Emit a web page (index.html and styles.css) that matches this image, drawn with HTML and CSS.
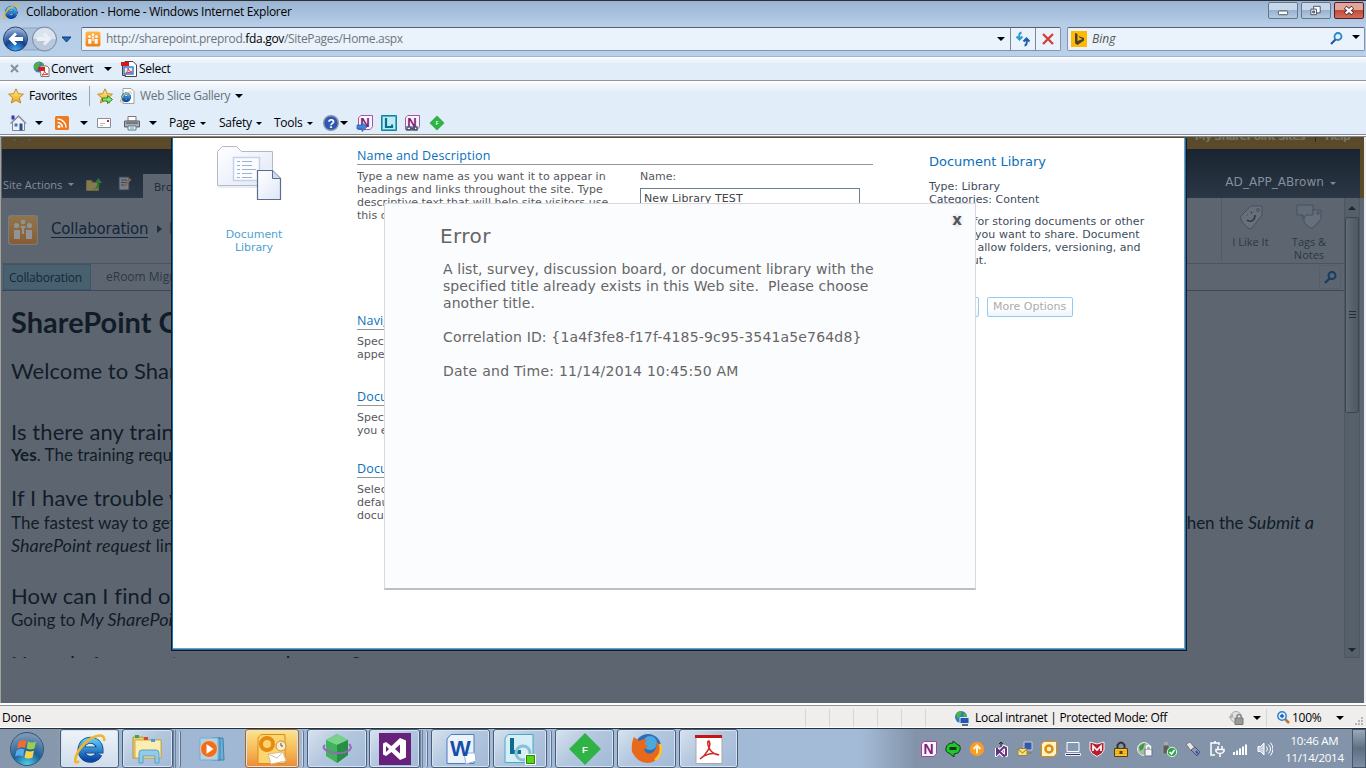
FILE: index.html
```html
<!DOCTYPE html>
<html lang="en">
<head>
<meta charset="utf-8">
<title>Collaboration - Home</title>
<link rel="stylesheet" href="styles.css">
</head>
<body>
<svg width="0" height="0" class="defs" aria-hidden="true">
  <defs>
    <linearGradient id="gold" x2="0" y2="1"><stop stop-color="#fff3a0"/><stop offset="1" stop-color="#f0a010"/></linearGradient>
    <radialGradient id="ball" cx=".5" cy="1" r=".95"><stop stop-color="#45b5ff"/><stop offset=".5" stop-color="#123f8c"/><stop offset="1" stop-color="#9db6dc"/></radialGradient>
    <radialGradient id="orb" cx=".5" cy="1" r=".9"><stop stop-color="#4fd8f0"/><stop offset=".5" stop-color="#1b5f96"/><stop offset="1" stop-color="#7894b4"/></radialGradient>
    <linearGradient id="ieb" x2="0" y2="1"><stop stop-color="#58c4f4"/><stop offset="1" stop-color="#0b48a8"/></linearGradient>
    <linearGradient id="orange" x2="0" y2="1"><stop stop-color="#ffb84a"/><stop offset="1" stop-color="#f07c10"/></linearGradient>
    <linearGradient id="paper" x2="1" y2="1"><stop stop-color="#fff"/><stop offset="1" stop-color="#dfe7f7"/></linearGradient>
    <symbol id="ie" viewBox="0 0 32 32">
      <path d="M25 21A9.500 9.500 0 1 1 26 17H10" fill="none" stroke="#0d3f7d" stroke-width="7"/>
      <path d="M25 21A9.500 9.500 0 1 1 26 17H10" fill="none" stroke="url(#ieb)" stroke-width="5.500"/>
      <path d="M5 28C-2 34 1 20 10 11S32-1 30 8" fill="none" stroke="#f0b52c" stroke-width="2.600"/>
    </symbol>
    <symbol id="star" viewBox="0 0 16 16"><path d="M8 .8l2.200 4.900 5.200.5-4 3.500 1.200 5.300L8 12.300 3.400 15l1.200-5.300-4-3.500 5.200-.5z" fill="url(#gold)" stroke="#c58a1c"/></symbol>
    <symbol id="people" viewBox="0 0 30 30">
      <rect width="30" height="30" rx="3" fill="#fff" opacity=".5"/><rect x="1" y="1" width="28" height="28" rx="3" fill="url(#orange)"/>
      <g fill="#fff"><circle cx="15" cy="7" r="2.300"/><circle cx="8.500" cy="10.500" r="2.600"/><circle cx="21.500" cy="10.500" r="2.600"/><path d="M6 15h6v9H6zM18 15h6v9h-6zM12 11h6l-2 3v5h-2v-5z"/></g>
    </symbol>
    <symbol id="one" viewBox="0 0 16 16"><path d="M3 .5h12.500v12L13 15.500H.5V3z" fill="#fbf4fb" stroke="#9c4b9a"/><text x="2.500" y="12.500" class="glyph" font-size="14" fill="#7d2078">N</text></symbol>
    <symbol id="fgem" viewBox="0 0 32 32"><path d="M16 1l15 15-15 15L1 16z" fill="#2fb344"/><text x="16" y="19.500" text-anchor="middle" class="glyph" font-size="9" fill="#fff">F</text></symbol>
  </defs>
</svg>

<header class="titlebar">
  <svg class="ie16"><use href="#ie"/></svg>
  <span class="win-title">Collaboration - Home - Windows Internet Explorer</span>
  <div class="winbtns">
    <span class="wb"><svg viewBox="0 0 30 16"><rect x="10" y="8.500" width="10" height="4" rx="1" fill="#fff" stroke="#454c5c"/></svg></span>
    <span class="wb"><svg viewBox="0 0 30 16"><path d="M12.500 3.500h7v7h-7z" fill="#fff" stroke="#454c5c"/><path d="M9.500 6.500h6v6h-6z" fill="#fff" stroke="#454c5c"/><path d="M11.500 8.500h2v2h-2z" fill="#9fb8d5" stroke="#454c5c"/></svg></span>
    <span class="wb close"><svg viewBox="0 0 30 16"><path d="M11 4.500l8 7M19 4.500l-8 7" stroke="#4c3038" stroke-width="4.400"/><path d="M11.500 5l7 6M18.500 5l-7 6" stroke="#fff" stroke-width="2.400"/></svg></span>
  </div>
</header>

<div class="address">
  <svg class="nav" viewBox="0 0 74 30">
    <rect x="14" y="4" width="40" height="22" rx="10" fill="#a9c0dc" stroke="#8ba5c6"/>
    <circle cx="15.500" cy="15" r="12" fill="url(#ball)" stroke="#2d4468"/>
    <path d="M15 8.500l-6.500 6.500 6.500 6.500 2-2L14.500 17H23v-4h-8.500l2.500-2.500z" fill="#fff"/>
    <circle cx="44.500" cy="15" r="12" fill="#b9c9db" stroke="#76879d"/><path d="M33.500 15a11 11 0 0 1 22 0z" fill="#dbe4ee"/>
    <path d="M45 8.500l6.500 6.500-6.500 6.500-2-2 2.500-2.500H37v-4h8.500L43 10.500z" fill="#eaf0f6"/>
    <path d="M62 13h9l-4.500 5z" fill="#1e6ac0" stroke="#123d72"/>
  </svg>
  <div class="urlbox">
    <svg class="i16"><use href="#people"/></svg>
    <span class="url">http://sharepoint.preprod.<b>fda.gov</b>/SitePages/Home.aspx</span>
    <i class="caret push"></i>
    <span class="cell first"><svg width="16" height="16" viewBox="0 0 16 16" fill="none" stroke-width="2"><path d="M6.500 1.500C3 2 4.500 5 4.500 8M1.500 5.500l3 3 3-3" stroke="#2e9bd6"/><path d="M9.500 14.500c3.500-.5 2-3.500 2-6.500M8.500 10.500l3-3 3 3" stroke="#1c5bb0"/></svg></span>
    <span class="cell"><svg width="14" height="14" viewBox="0 0 14 14"><path d="M2 2l10 10M12 2L2 12" stroke="#d0413c" stroke-width="2.400"/></svg></span>
  </div>
  <div class="search">
    <svg width="16" height="16" viewBox="0 0 16 16"><path d="M0 0h16v16H0z" fill="#ffb900"/><path d="M4 2l2.500 1v7l5-2-2.800-1.200L7.500 5l5.500 2v2.500L6.500 14 4 12.300z" fill="#46423a"/></svg>
    <em>Bing</em>
    <svg class="push" width="13" height="13" viewBox="0 0 13 13"><circle cx="8" cy="4.500" r="3.500" fill="#e4f4fd" stroke="#2985c8" stroke-width="1.800"/><path d="M5.500 7.500L1 12" stroke="#1f55a5" stroke-width="2.200"/></svg>
    <i class="caret"></i>
  </div>
</div>

<div class="bar convert">
  <svg class="x" width="9" height="9" viewBox="0 0 9 9"><path d="M1 1l7 7M8 1L1 8" stroke="#8b8f96" stroke-width="2"/></svg>
  <svg class="ic-conv" width="17" height="16" viewBox="0 0 17 16"><circle cx="6" cy="6" r="5.500" fill="#3d78c8"/><path d="M1 5c2-4 4-5 6-4l-1 4-2 4-3-1zM8 1l3 2-1 3z" fill="#4cb33a"/><path d="M7 5h7l2 2v8.500H8z" fill="#fff" stroke="#777"/><path d="M5 6h7v4H5z" fill="#d32020"/><path d="M9 14c2-2 3-3 2-5 1 3 2 4 4 4z" fill="none" stroke="#d33"/></svg>
  <span class="w-convert">Convert</span><i class="caret"></i>
  <svg class="ic-sel" width="16" height="16" viewBox="0 0 16 16"><path d="M1.500 3.500v11h3M4 .5h8l3.500 3.500v11.500H4z" fill="#fff" stroke="#444"/><path d="M0 1h8v4H0z" fill="#d81818"/><path d="M3 6h9v7H3z" fill="#dcecff" stroke="#3d7fd0" stroke-width="1.500"/><path d="M5 12c2-2 2-3 2-5 1 3 2 4 4 4z" fill="none" stroke="#d33"/></svg>
  <span>Select</span>
</div>

<div class="bars">
  <div class="bar favs">
    <svg class="i16"><use href="#star"/></svg>
    <span class="w-fav">Favorites</span>
    <i class="vline"></i>
    <svg width="16" height="16" viewBox="0 0 16 16"><use href="#star"/><path d="M5.500 10h5V7.500l5 4-5 4V13h-5z" fill="#8fe070" stroke="#2a8c23"/></svg>
    <svg class="ml6" width="16" height="16" viewBox="0 0 16 16"><path d="M3 .5h8l3 3v12H3z" fill="#fff" stroke="#98a2ae"/><use href="#ie" x="0" y="3" width="12" height="12"/></svg>
    <span class="gray w-web">Web Slice Gallery</span><i class="caret"></i>
  </div>
  <div class="bar cmds">
    <svg width="18" height="18" viewBox="0 0 18 18"><path d="M3.500 8v8.500h12V8l-6-5.500z" fill="#eaf1fa" stroke="#7c8798"/><path d="M1.500 9.500l8-7.500 7.500 7.500" fill="none" stroke="#8a93a6" stroke-width="1.500"/><path d="M2.500 1.500h3v4h-3z" fill="#2c3cae"/><path d="M5.500 9.500h3v3h-3z" fill="#57709c"/><path d="M10.500 9.500h3v7h-3z" fill="#2f4d8c"/></svg>
    <i class="caret c1"></i>
    <svg class="rss" width="14" height="14" viewBox="0 0 14 14"><rect width="14" height="14" rx="1.500" fill="#ee7b22"/><circle cx="4" cy="10.500" r="1.500" fill="#fff"/><path d="M2.500 6.500a5 5 0 0 1 5 5M2.500 3a8.500 8.500 0 0 1 8.500 8.500" fill="none" stroke="#fff" stroke-width="1.500"/></svg>
    <i class="caret c2"></i>
    <svg class="mail" width="14" height="10" viewBox="0 0 14 10"><path d="M.5.500h13v9H.5z" fill="#fff" stroke="#8c8f98"/><path d="M10 2h2v2h-2z" fill="#d22"/><path d="M3 5.500h5M3 7.500h3" stroke="#bbb"/></svg>
    <svg class="print" width="16" height="16" viewBox="0 0 16 16"><path d="M4 1.500h8V6H4z" fill="#fff" stroke="#777"/><path d="M.5 6h15v6H.5z" fill="#a9adb3" stroke="#5a5e66"/><path d="M2 8h12" stroke="#43474e"/><path d="M4 11h8v4H4z" fill="#e9f6ff" stroke="#678"/><path d="M6 13h4" stroke="#3ba"/></svg>
    <i class="caret c3"></i>
    <span class="w-page">Page</span><i class="caret t"></i>
    <span class="w-safe">Safety</span><i class="caret t"></i>
    <span class="w-tools">Tools</span><i class="caret t"></i>
    <svg class="help" width="16" height="16" viewBox="0 0 16 16"><circle cx="8" cy="8" r="7.300" fill="#2c56b4" stroke="#8a93a6" stroke-width="1.400"/><text x="8" y="12.500" text-anchor="middle" class="glyph" font-size="12" fill="#fff">?</text></svg><i class="caret h"></i>
    <svg class="n1" width="18" height="18" viewBox="0 0 18 18"><use href="#one" x="2" y="1" width="15" height="15"/><path d="M1 11h5V8.500l5 4.500-5 4.500V15H1z" fill="#3c86dc" stroke="#215aa8" stroke-width=".7"/></svg>
    <svg class="n2" width="16" height="16" viewBox="0 0 16 16"><path d="M.5.500h15v15H.5z" fill="#48b5cf" stroke="#167f9c"/><path d="M2 2h12v12H2z" fill="#bfe9f3"/><path d="M5 3v9h6v-2.500" fill="none" stroke="#0b6f90" stroke-width="2.200"/></svg>
    <svg class="n3" width="17" height="17" viewBox="0 0 17 17"><use href="#one" x="1" y="0" width="15" height="15"/><path d="M3 12h4v3H3zM9 12h4v3H9zM6 13.500h5" fill="none" stroke="#4a5872" stroke-width="1.500"/></svg>
    <svg class="n4" width="16" height="16"><use href="#fgem"/></svg>
  </div>
</div>

<main class="viewport">
  <div class="page">
    <div class="goldbar">
      <svg width="20" height="4" viewBox="0 0 20 4"><path d="M1 0h3v2H1zM9 2h2v2H9zM16 0h3v2h-3z" fill="#4b5563"/></svg>
      <span class="push">My SharePoint Sites</span><i></i><span>Help</span></div>
    <div class="ribbon">
      <span class="sa">Site Actions</span><i class="caret dim"></i>
      <svg class="r1" width="17" height="15" viewBox="0 0 17 15"><path d="M.5 4.500h5l1 2h6v8H.5z" fill="#847a50" stroke="#6d653f"/><path d="M6 13c4 0 5-2 5-6H8.500L12.500 2 16 7h-2.500c0 5-3 7-7.500 6z" fill="#2e7434"/></svg>
      <svg class="r2" width="14" height="15" viewBox="0 0 14 15"><path d="M1 1h10v13H1z" fill="#747e8a" stroke="#39434f"/><path d="M3 4h6M3 6.500h5M3 9h3" stroke="#3a4657"/><path d="M6 10l6.500-7" stroke="#80684a" stroke-width="2.500"/></svg>
      <span class="tab">Browse</span>
      <span class="user">AD_APP_ABrown</span><i class="caret dim"></i>
    </div>
    <div class="body">
      <div class="content">
        <div class="sitehead">
          <svg class="logo"><use href="#people"/></svg>
          <span class="crumb">Collaboration</span>
          <svg class="arr" width="5" height="8" viewBox="0 0 5 8"><path d="M0 0l5 4-5 4z" fill="#222d3c"/></svg>
          <span class="crumb plain">Home</span>
          <div class="social s1">
            <svg width="26" height="26" viewBox="0 0 26 26" fill="none" stroke="#36455a"><path d="M3 12L13 2h11v9L14 24q-2 2-4 0l-6-6q-2-3-1-6z" fill="#6c7580"/><circle cx="20" cy="6" r="1.500"/><path d="M9 11h.5M13 8l1 1M9 16c4 3 8 0 8-5" stroke="#111d2b" stroke-width="1.500"/></svg>
            <span>I Like It</span></div>
          <div class="social">
            <svg width="28" height="26" viewBox="0 0 28 26" fill="none" stroke="#36455a"><path d="M9 10l8-4h9v9l-8 9q-2 1-4-1l-5-5z" fill="#6c7580"/><path d="M2 1h16v10h-7l-3 4v-4H2z" fill="#66707b"/><circle cx="23" cy="9" r="1.300"/></svg>
            <span>Tags &amp;<br>Notes</span></div>
        </div>
        <div class="topnav"><span class="on">Collaboration</span><span class="off">eRoom Migration</span>
          <span class="mag"><svg width="13" height="13" viewBox="0 0 13 13"><circle cx="8" cy="4.500" r="3.500" fill="none" stroke="#173d63" stroke-width="2"/><path d="M5.500 7.500L1 12" stroke="#173d63" stroke-width="2.400"/></svg></span></div>
        <article>
          <h1>SharePoint Collaboration</h1>
          <p class="welcome">Welcome to SharePoint</p>
          <h2 class="q1">Is there any training</h2>
          <p class="a1"><b>Yes</b>. The training requirements</p>
          <h2 class="q2">If I have trouble who</h2>
          <p class="a2 split"><span>The fastest way to get</span><span>then the <em>Submit a</em></span></p>
          <p class="a3"><em>SharePoint request</em> link</p>
          <h2 class="q3">How can I find out</h2>
          <p class="a4">Going to <em>My SharePoint</em></p>
          <h2 class="q4">How do I request a new workspace?</h2>
        </article>
      </div>
      <div class="scroll"><i class="caret up"></i><div class="thumb"><i></i></div><i class="caret"></i></div>
    </div>
  </div>

  <section class="dialog">
    <div class="libicon">
      <svg width="68" height="58" viewBox="0 0 68 58">
        <path d="M2.500 6.500l5-5h14l5 5h31v34h-55z" fill="url(#paper)" stroke="#b4bac8"/><path d="M3 42h55" stroke="#d8dae0"/>
        <path d="M18.500 12.500h26v23h-26z" fill="#fafcff" stroke="#c5d3ea" stroke-width="1.500"/>
        <path d="M22 16.500h3M27 16.500h10M22 20.500h3M27 20.500h10M22 24.500h3M27 24.500h14M22 28.500h3M27 28.500h10M22 32.500h3M27 32.500h10" stroke="#9fb1cd"/>
        <path d="M42.500 25.500h15l8 8v21h-23z" fill="url(#paper)" stroke="#5a6e8c" stroke-width="1.200"/><path d="M57.500 25.500v8h8" fill="#cfdcf0" stroke="#5a6e8c"/>
      </svg>
      <span>Document<br>Library</span>
    </div>
    <div class="form">
      <section class="f1"><h3>Name and Description</h3>
        <div class="row"><p>Type a new name as you want it to appear in<br>headings and links throughout the site. Type<br>descriptive text that will help site visitors use<br>this document library.</p>
          <div class="field"><label>Name:</label><div class="input">New Library TEST</div></div></div></section>
      <section class="f2"><h3>Navigation</h3><p>Specify whether<br>appears in</p></section>
      <section class="f3"><h3>Document Version</h3><p>Specify whether<br>you edit</p></section>
      <section class="f4"><h3>Document Template</h3><p>Select a<br>default<br>document</p></section>
    </div>
    <aside>
      <h4>Document Library</h4>
      <p>Type: Library<br>Categories: Content</p>
      <p class="desc">A place for storing documents or other<br>content you want to share. Document<br>libraries allow folders, versioning, and<br>check out.</p>
      <div class="btns"><span class="btn create">Create</span><span class="btn">More Options</span></div>
    </aside>
  </section>

  <section class="error">
    <span class="xclose">x</span>
    <h2>Error</h2>
    <p>A list, survey, discussion board, or document library with the<br>specified title already exists in this Web site.&nbsp; Please choose<br>another title.</p>
    <p class="corr">Correlation ID: {1a4f3fe8-f17f-4185-9c95-3541a5e764d8}</p>
    <p class="date">Date and Time: 11/14/2014 10:45:50 AM</p>
  </section>
</main>

<footer class="status">
  <span class="done">Done</span>
  <i class="pane"></i><i class="pane"></i><i class="pane"></i><i class="pane"></i><i class="pane"></i><i class="pane"></i>
  <svg class="globe" width="16" height="16" viewBox="0 0 16 16"><circle cx="7" cy="7" r="6" fill="#2f79c8"/><path d="M2 5c2-4 4-4 6-4l-1 4-3 4zM9 4l3-1 1 4-3 2z" fill="#4cb43c"/><path d="M6 7.500h9v6H6z" fill="#1f57b5" stroke="#dfe6ee"/><path d="M8 15h6" stroke="#345" stroke-width="1.500"/></svg>
  <span class="zone">Local intranet | Protected Mode: Off</span>
  <svg class="seclock" width="18" height="16" viewBox="0 0 18 16"><circle cx="9" cy="7" r="5.500" fill="#e2e2e2" stroke="#aaa"/><path d="M1 8l5-4v3h3" fill="#a8a8a8"/><path d="M8 8h8v6.500H8z" fill="#999" stroke="#777"/><path d="M10 8V5.500q2-2 4 0V8" fill="none" stroke="#888" stroke-width="1.500"/></svg>
  <i class="caret a"></i><i class="pane z"></i>
  <svg class="zoomic" width="13" height="13" viewBox="0 0 13 13"><path d="M8 8l4 4" stroke="#b9752e" stroke-width="2.500"/><circle cx="5" cy="5" r="4.200" fill="#d9efff" stroke="#3a80c8" stroke-width="1.500"/><path d="M5 3v4M3 5h4" stroke="#1c5eb0" stroke-width="1.500"/></svg>
  <span class="pct">100%</span><i class="caret b"></i>
  <svg class="grip" width="9" height="9" viewBox="0 0 9 9"><path d="M6 0h2v2H6zM3 3h2v2H3zM6 3h2v2H6zM0 6h2v2H0zM3 6h2v2H3zM6 6h2v2H6z" fill="#b9b5b5"/></svg>
</footer>

<div class="taskbar">
  <svg class="start" width="36" height="36" viewBox="0 0 36 36"><circle cx="18" cy="18" r="16.500" fill="url(#orb)" stroke="#31587d"/><path d="M9.500 11q4-3 8-1L16 17q-4-2-8 1z" fill="#ef6d32"/><path d="M19 10.500q4 2 8 0L25.500 17.500q-4 2-8 0z" fill="#9bce4a"/><path d="M7.500 19.500q4-3 8-1L14 25.500q-4-2-8 0z" fill="#55acec"/><path d="M17 19.500q4 2 8 0L23.500 26.500q-4 2-8 0z" fill="#fbd34a"/></svg>
  <span class="tb ieb"><svg width="32" height="32"><use href="#ie"/></svg></span>
  <span class="tb ex"><svg width="34" height="32" viewBox="0 0 34 32"><path d="M2 4h10l2 3h16v18H2z" fill="#e9cd72" stroke="#b9983e"/><path d="M4 7h26v18H4z" fill="#fbeeb0" stroke="#cbab52"/><path d="M4 2h4v3H4z" fill="#35a94a"/><path d="M13 4h4v3h-4z" fill="#d54a30"/><path d="M20 6h4v3h-4z" fill="#4a9be0"/><path d="M8 20q0-3 3-3h14q3 0 3 3v10h-4v-7H12v7H8z" fill="#92cbe8" stroke="#5a9fc4"/></svg></span>
  <i class="stack s2"></i>
  <span class="wmp"><svg width="30" height="28" viewBox="0 0 30 28"><path d="M14 3h8v22h-8zM18 3h7l1 22h-6z" fill="#6ab0d8" stroke="#4280ac"/><path d="M2 3h18v22H2z" fill="#a8d4ee" stroke="#76acd0"/><circle cx="11" cy="14" r="8.500" fill="#ee6e1c" stroke="#fbc79f"/><path d="M8.500 9l7 5-7 5z" fill="#fff"/></svg></span>
  <span class="tb ol"><svg width="32" height="32" viewBox="0 0 32 32"><path d="M5 1.500h24v29H2V5z" fill="#fbd570" stroke="#d88c1c"/><circle cx="11" cy="11" r="6" fill="none" stroke="#e88a10" stroke-width="4"/><circle cx="25" cy="13" r="5" fill="#f6ecd6" stroke="#d18a28"/><path d="M25 10v3h2" stroke="#75521c" fill="none"/><path d="M12 21l15-2 3 9-15 3z" fill="#fff" stroke="#d8bf95"/><path d="M12 21l9 4 6-6" fill="none" stroke="#d8bf95"/></svg></span>
  <i class="stack s1b"></i>
  <span class="tb gr"><svg width="34" height="34" viewBox="0 0 34 34"><path d="M17 2l11 6v15l-11 8-11-7V8z" fill="#42b25c"/><path d="M6 8l11 5 11-5-11-6z" fill="#79d18b"/><path d="M17 13v18l11-8V8z" fill="#278f45"/><path d="M29 12c6 5-3 10-13 9S1 16 5 13" fill="none" stroke="#9369b8" stroke-width="2"/></svg></span>
  <span class="tb vs"><svg width="32" height="32" viewBox="0 0 32 32"><path d="M0 0h32v32H0z" fill="#68217a"/><path d="M21 5l6 2.500v17L21 27l-8.500-8L7 23l-3-1.500v-11L7 9l5.500 4zM21 11.500L16 16l5 4.500zM7 13v6l3-3z" fill="#fff" fill-rule="evenodd"/></svg></span>
  <i class="stack s2 v"></i>
  <span class="tb wd"><svg width="32" height="32" viewBox="0 0 32 32"><path d="M6 1.500h23v29H2V6z" fill="#ecf3fb" stroke="#4a7cc0"/><path d="M19 20h11l1 8-10 3z" fill="#fff" stroke="#9bb3d4"/><text x="5" y="23" class="glyph" font-size="22" fill="#164fa8">W</text></svg></span>
  <span class="tb ly"><svg width="34" height="34" viewBox="0 0 34 34"><path d="M5 2.500h25v28H2V6z" fill="#d6eef5" stroke="#4aa8c4"/><path d="M9 6v14h9" fill="none" stroke="#0c6d90" stroke-width="4"/><circle cx="20" cy="21" r="7" fill="none" stroke="#8abfd8" stroke-width="3"/><path d="M22.500 22.500h10v10h-10z" fill="#58d41a" stroke="#fff"/><path d="M23.500 23.500h8v8h-8z" fill="none" stroke="#2d870c"/></svg></span>
  <i class="stack s1b"></i>
  <span class="tb fg"><svg width="34" height="34"><use href="#fgem"/></svg></span>
  <span class="tb ff"><svg width="32" height="32" viewBox="0 0 32 32"><circle cx="17" cy="14" r="13" fill="#2b6fb8"/><circle cx="19" cy="10" r="7" fill="#4ba7dc"/><path d="M3 4l5 4q5-3 8-1l-3 4 4 2-4 4q3 5 8 3 5-3 5-11 5 5 3 12-4 9-13 9T1 19Q0 10 3 4z" fill="#e8691c"/><path d="M29 11q3 10-5 16" stroke="#f9c33b" stroke-width="2.500" fill="none"/></svg></span>
  <span class="tb pd"><svg width="32" height="32" viewBox="0 0 32 32"><path d="M3 3.500h26v27H3z" fill="#fff" stroke="#a9a9a9"/><path d="M2 2h27v3H2z" fill="#c41414"/><path d="M7 26C13 22 19 13 16 8c-3-1-1 13 10 14-6-3-14-1-19 4z" fill="none" stroke="#d02828" stroke-width="1.500"/></svg></span>

  <div class="tray">
    <svg viewBox="0 0 16 16"><use href="#one"/></svg>
    <svg viewBox="0 0 16 16"><path d="M1 7q1-5 7-5V0l5 4h1q2 2 1 5-1 4-6 4v3L4 12Q0 11 1 7z" fill="#22c52e" stroke="#0b3d10"/><path d="M4.500 7.500h7" stroke="#0a4010" stroke-width="3"/></svg>
    <svg viewBox="0 0 16 16"><circle cx="8" cy="8" r="7.200" fill="#fb9b23"/><path d="M8 12.500V5M4.500 8L8 4.500 11.500 8" fill="none" stroke="#fff3da" stroke-width="2"/></svg>
    <svg viewBox="0 0 16 16"><path d="M4 7v6l7-7 2 1v7l-2 1-7-7" fill="none" stroke="#fff" stroke-width="4"/><path d="M4 7v6l7-7 2 1v7l-2 1-7-7" fill="none" stroke="#68307e" stroke-width="2"/><path d="M8 6V1M6 3l2-2 2 2" stroke="#222" fill="none"/></svg>
    <svg viewBox="0 0 16 16"><path d="M7 1h8v8H7z" fill="#3158ac" stroke="#c8ccd4"/><path d="M1 7.500h9v7H1z" fill="#f9df84" stroke="#9b8240"/><path d="M1 8l4.500 4L10 8M11 12h4" fill="none" stroke="#8c7434"/></svg>
    <svg viewBox="0 0 16 16"><path d="M3 .5h12.500v12L13 15.500H.5V3z" fill="#fff4c8" stroke="#dc8c10"/><circle cx="8" cy="8" r="3.500" fill="none" stroke="#e28a0c" stroke-width="2.500"/></svg>
    <svg viewBox="0 0 16 16"><path d="M2 1.500h12v9H2z" fill="#8598b2" stroke="#fff"/><path d="M.5 12.500h15v2H.5z" fill="#28364c" stroke="#eef"/></svg>
    <svg viewBox="0 0 16 16"><path d="M1 1l7 2 7-2v8q-1 4-7 6.500Q2 13 1 9z" fill="#b81e30" stroke="#f2f2f2"/><path d="M4 10V5l4 4 4-4v5" fill="none" stroke="#fff" stroke-width="1.700"/></svg>
    <svg viewBox="0 0 16 16"><path d="M4.500 8V4q3.500-5 7 0v4" fill="none" stroke="#333" stroke-width="2"/><path d="M1.500 7.500h13v8h-13z" fill="#f5c22e" stroke="#5b4206"/><path d="M2 10h12M2 12.500h12" stroke="#e0a51c"/><path d="M6.500 10h3v3h-3z" fill="#5b4206"/></svg>
    <svg viewBox="0 0 16 16"><circle cx="7" cy="8" r="6.500" fill="#a9b8a6" stroke="#e9eee8"/><path d="M2 6q4-4 6-4L6 8l-3 2z" fill="#3a9a3e"/><path d="M8 8h7v7H8z" fill="#f4f4f4" stroke="#66728a"/><path d="M9.500 8V5.500q2-2 4 0V8" fill="none" stroke="#fff" stroke-width="1.500"/></svg>
    <svg viewBox="0 0 16 16"><path d="M2 4h6v9H2z" fill="#5a5e62" stroke="#999"/><path d="M3 1h4v3H3z" fill="#aaa"/><circle cx="11" cy="11" r="4.700" fill="#31a447" stroke="#dff4e0"/><path d="M8.500 11l2 2 3-4" fill="none" stroke="#fff" stroke-width="1.700"/></svg>
    <svg viewBox="0 0 16 16"><path d="M1 3l4-2 5 6-4 3z" fill="#e5e7ea" stroke="#777"/><path d="M6 9l4-3 5 5-3 4z" fill="#8a99b5" stroke="#556"/><path d="M11 10l2 3" stroke="#2750c0" stroke-width="2"/></svg>
    <svg viewBox="0 0 16 16" fill="none" stroke="#fff" stroke-width="1.500"><path d="M6 14H2V2h8v2M5 1h2M9 5v3M13 5v3M7 8.500h8v2q-1 2-4 2t-4-2zM11 13v3"/></svg>
    <svg viewBox="0 0 16 16" fill="#fff"><path d="M0 11h2v3H0zM3 9.500h2V14H3zM6 7.500h2V14H6zM9 5.500h2V14H9zM12 3.500h2V14h-2z"/></svg>
    <svg viewBox="0 0 16 16"><path d="M1 5.500h2.500L7 2v12l-3.500-3.500H1z" fill="#c5d0e0" stroke="#fff"/><path d="M9.500 5.500q2 2.500 0 5M11.500 3.500q4 4.500 0 9M13.500 1.500q5 6.500 0 13" fill="none" stroke="#fff"/></svg>
  </div>
  <div class="clock"><span>10:46 AM</span><span>11/14/2014</span></div>
  <i class="showdesk"></i>
</div>
</body>
</html>
```
FILE: styles.css
```css
* { box-sizing: border-box; }
body { margin: 0; width: 1366px; height: 768px; overflow: hidden; display: flex; flex-direction: column; font: 12px/16px "Open Sans", sans-serif; color: #000; background: #5d6670; }
h1, h2, h3, h4, p { margin: 0; font-weight: normal; }
svg { flex: none; display: block; }
.defs { position: absolute; }
.glyph { font-family: "Liberation Sans", sans-serif; font-weight: bold; }
.i16, .ie16 { width: 16px; height: 16px; }
.push { margin-left: auto; }
.caret { flex: none; width: 0; height: 0; border: 4px solid transparent; border-top-color: #000; border-bottom: 0; }
.dim { border-top-color: #7d8792; border-width: 3px; border-bottom: 0; }

.titlebar { flex: none; height: 23px; border-top: 1px solid #302f35; background: linear-gradient(#99b4d2, #b5cbe5); display: flex; align-items: center; padding-left: 3px; }
.win-title { margin-left: 7px; letter-spacing: -.28px; }
.winbtns { margin-left: auto; display: flex; gap: 3px; padding-right: 2px; align-self: flex-start; margin-top: 1px; }
.wb { width: 30px; height: 17px; border: 1px solid #65758d; border-radius: 2px; background: linear-gradient(#c6d7ea 45%, #9ab2cf 50%, #b4cae2); }
.wb svg { width: 28px; height: 15px; }
.wb.close { background: linear-gradient(#e3a49a 45%, #c24a36 50%, #d0705a); border-color: #50202a; }

.address { flex: none; height: 34px; background: linear-gradient(#b6cce7, #b9d0ea); display: flex; align-items: center; padding: 0 1px 2px 0; border-bottom: 1px solid #9fb4cc; }
.nav { width: 74px; height: 30px; }
.urlbox, .search { height: 24px; background: #eaf2fb; border: 1px solid #8493a6; border-top-color: #59616e; display: flex; align-items: center; border-radius: 2px; }
.urlbox { width: 980px; margin-left: 7px; padding-left: 3px; }
.url { color: #70757c; margin-left: 5px; letter-spacing: -.33px; }
.url b { font-weight: normal; color: #000; }
.urlbox .caret { margin-right: 5px; }
.cell { align-self: stretch; width: 25px; border-left: 1px solid #7c8793; display: flex; align-items: center; justify-content: center; }
.search { width: 298px; margin-left: 6px; padding: 0 4px 0 3px; }
.search em { color: #555; margin-left: 5px; }
.search .caret { margin-left: 9px; margin-bottom: 4px; }

.bar { display: flex; align-items: center; letter-spacing: -.25px; white-space: nowrap; }
.convert { flex: none; height: 24px; background: linear-gradient(#fff 1px, #f2f7fd 2px, #edf2fb 5px, #e1edf9 6px); border-bottom: 1px solid #8f949f; padding-left: 10px; }
.convert .ic-conv { margin-left: 14px; }
.w-convert { width: 53px; margin-left: 1px; }
.ic-sel { margin: 0 2px 0 9px; }
.bars { flex: none; height: 56px; background: linear-gradient(#fff 1px, #f5f9fe 2px, #e1edf9 12px); border-bottom: 3px double #858990; }
.favs { height: 29px; padding: 0 0 0 8px; letter-spacing: -.32px; }
.w-fav { width: 60px; margin-left: 5px; }
.vline { width: 1px; height: 20px; background: #9aa3b0; margin-right: 7px; }
.ml6 { margin-left: 7px; }
.gray { color: #6c7178; }
.w-web { width: 95px; margin-left: 4px; }
.cmds { height: 26px; padding-left: 9px; }
.c1 { margin-left: 8px; } .rss { margin-left: 12px; } .c2 { margin-left: 11px; } .mail { margin-left: 9px; } .print { margin-left: 13px; } .c3 { margin-left: 9px; }
.w-page { width: 31px; margin-left: 12px; }
.w-safe { width: 37px; margin-left: 13px; }
.w-tools { width: 33px; margin-left: 12px; }
.t { border-width: 3.500px; border-bottom: 0; }
.help { margin-left: 10px; } .h { margin-left: 1px; } .n1 { margin-left: 8px; } .n2 { margin-left: 7px; } .n3 { margin-left: 7px; } .n4 { margin-left: 8px; }

.viewport { flex: none; height: 566px; position: relative; border-left: 1px solid #a5a29c; border-right: 2px solid #eeeff0; background: #5d6670; overflow: hidden; }
.page { height: 521px; overflow: hidden; padding-left: 1px; color: #121c28; }
.goldbar { height: 12px; background: #5a4a2a; display: flex; align-items: flex-start; font: bold 11px/12px "DejaVu Sans", sans-serif; color: #797365; }
.goldbar svg { margin: 2px 0 0 10px; }
.goldbar span { margin-top: -6px; letter-spacing: -.8px; white-space: nowrap; }
.goldbar span:last-child { margin-right: 14px; }
.goldbar i { width: 1px; height: 5px; margin: 0 9px 0 10px; background: #222c38; }
.ribbon { height: 49px; width: 1358px; background: linear-gradient(#192430, #2c3746); box-shadow: 4px 0 #5a4a2a; display: flex; align-items: flex-end; color: #848e99; font: 11px/13px "Open Sans", sans-serif; }
.ribbon > * { margin-bottom: 7px; }
.ribbon .caret { margin-bottom: 12px; }
.sa { width: 62px; margin-left: 1px; letter-spacing: 0; }
.ribbon .sa + .caret { margin-left: 3px; }
.r1 { margin-left: 12px; } .r2 { margin-left: 15px; }
.ribbon .tab { margin: 0 0 0 11px; padding: 6px 0 5px 11px; width: 60px; height: 24px; background: #5d6670; color: #1b2736; letter-spacing: .2px; }
.user { margin-left: auto; font: 12px/13px "DejaVu Sans", sans-serif; letter-spacing: .05px; }
.ribbon .user { margin-bottom: 9px; }
.ribbon .user + .caret { margin: 0 24px 13px 6px; }
.body { display: flex; height: 460px; }
.content { width: 1342px; }
.sitehead { height: 66px; display: flex; align-items: center; border-bottom: 1px solid #4a5560; }
.logo { width: 30px; height: 30px; margin-left: 6px; filter: brightness(.7); opacity: .6; margin-top: -1px; }
.crumb { margin-left: 13px; color: #13253c; font: 15px/16px "DejaVu Sans", sans-serif; letter-spacing: -.2px; border-bottom: 1px solid #13253c; margin-top: -3px; }
.crumb.plain { border: 0; color: #3a4655; margin-left: 6px; }
.arr { margin: -4px 0 0 9px; }
.social { width: 56px; height: 64px; display: flex; flex-direction: column; align-items: center; align-self: flex-start; padding-top: 6px; text-align: center; font: 11px/13px "Open Sans", sans-serif; color: #2b3747; gap: 5px; white-space: nowrap; margin-right: 7px; }
.social svg { opacity: .65; }
.s1 { margin: 0 0 0 auto; padding-right: 2px; width: 60px; border-left: 1px solid #505b66; }
.topnav { height: 27px; display: flex; border-bottom: 1px solid #3d4854; font: 12px/25px "Open Sans", sans-serif; letter-spacing: -.2px; }
.on { width: 88px; margin-left: 1px; padding-left: 5px; border: 1px solid #38566c; background: #49606f; color: #12273d; }
.off { margin-left: 15px; color: #2c3847; letter-spacing: 0; }
.mag { margin: 1px 3px 1px auto; width: 22px; border: 1px solid #55606b; display: flex; align-items: center; justify-content: center; }
article { padding-left: 9px; font: 17px/20px Lato, sans-serif; color: #121c28; white-space: nowrap; }
article em { font-size: 18px; line-height: 18px; }
h1 { font: bold 29px/34px Lato, sans-serif; margin-top: 14px; }
.welcome { font-size: 22px; line-height: 26px; margin-top: 19px; letter-spacing: .05px; }
article h2 { font-size: 22px; line-height: 26px; letter-spacing: .1px; }
.q1 { margin-top: 35px; }
.a1 { margin-top: 0; }
.q2 { margin-top: 20px; }
.a2 { margin-top: 2px; } .a3 { margin-top: 3px; }
.split { display: flex; justify-content: space-between; padding-right: 30px; }
.q3 { margin-top: 27px; }
.a4 { margin-top: 1px; }
.q4 { margin-top: 21px; }
.scroll { width: 16px; background: #56606a; border: 1px solid #4d5762; border-top: 0; display: flex; flex-direction: column; align-items: center; padding: 8px 0 5px; }
.scroll .caret { border-top-color: #1b2633; }
.scroll .up { transform: rotate(180deg); }
.thumb { width: 14px; height: 196px; margin: 7px 0 auto; border: 1px solid #3b4651; border-radius: 2px; background: linear-gradient(90deg, #616b75, #4d5863); display: flex; align-items: center; justify-content: center; }
.thumb i { width: 7px; height: 8px; background: repeating-linear-gradient(#222d38 0 1px, transparent 1px 3px); }

.dialog { position: absolute; left: 170px; top: 1px; width: 1016px; height: 513px; background: #fff; border: solid #111b26; border-width: 0 1px 1px; box-shadow: inset 1px 0 #0e72ba, inset -1px 0 #0e72ba, inset 0 -1px #0e72ba, inset -2px -2px #8b98a4; display: flex; font: 11px/13px "DejaVu Sans", sans-serif; color: #55585d; white-space: nowrap; }
.libicon { width: 80px; margin: 7px 0 0 42px; display: flex; flex-direction: column; align-items: center; color: #4e9fd3; text-align: center; gap: 25px; letter-spacing: -.05px; }
.libicon svg { margin-left: -10px; }
.form { width: 516px; margin-left: 63px; letter-spacing: .02px; }
h3 { font: 12.500px/16px "Open Sans", sans-serif; letter-spacing: .15px; color: #0b6fba; border-bottom: 1px solid #969696; height: 17px; margin-bottom: 5px; }
.form section { height: 72px; overflow: hidden; }
.form .f1 { padding-top: 10px; height: 175px; }
.form .f2 { height: 76px; }
.row { display: flex; }
.row p { width: 283px; }
.input { margin-top: 5px; width: 220px; height: 20px; border: 1px solid #6e7d90; padding: 3px; color: #444; letter-spacing: .12px; }
aside { margin-left: 56px; color: #3d4c5c; padding-top: 16px; }
h4 { font: 13px/15px "DejaVu Sans", sans-serif; letter-spacing: 0; color: #0b6fba; margin-bottom: 11px; }
.desc { margin-top: 9px; letter-spacing: .05px; }
.btns { display: flex; gap: 8px; margin-top: 30px; }
.btn { height: 20px; border: 1px solid #8fcbf4; border-radius: 2px; background: linear-gradient(#fff 50%, #eef4fa); color: #acacac; padding: 2px 5px; width: 86px; }
.btn.create { width: 50px; }

.error { position: absolute; left: 383px; top: 66px; width: 592px; height: 387px; background: #fbfcfe; border: 1px solid #d7d9e0; border-bottom: 2px solid #bdbfc6; padding: 20px 0 0 58px; font: 14px/17px "DejaVu Sans", sans-serif; color: #666; white-space: nowrap; letter-spacing: .07px; }
.error h2 { font-size: 20px; line-height: 24px; margin: 0 0 13px -3px; letter-spacing: .4px; }
.error p { margin-bottom: 17px; }
.corr { letter-spacing: .165px; }
.date { letter-spacing: .255px; }
.xclose { position: absolute; right: 11px; top: 8px; width: 14px; height: 18px; text-align: center; font-weight: bold; color: #555; font-size: 15px; background: radial-gradient(closest-side, #d9dce2, #fbfcfe); }

.status { flex: none; height: 25px; margin: 0; border-top: 2px solid #fff; box-shadow: inset 0 1px #8f9393, inset 0 -1px #fff; background: #f0eded; display: flex; align-items: center; padding-left: 2px; letter-spacing: -.25px; font-size: 12px; padding-top: 2px; }
.done { margin-right: 775px; width: 28px; }
.pane { width: 24px; height: 18px; border-left: 1px solid #d9d5d5; }
.globe { margin-left: 5px; }
.zone { width: 249px; margin-left: 5px; letter-spacing: -.3px; }
.seclock { margin-left: 3px; }
.a { margin-left: 8px; }
.pane.z { width: 8px; margin-left: 5px; }
.zoomic { margin-left: 3px; }
.pct { margin-left: 2px; width: 44px; }
.grip { margin-left: 11px; align-self: flex-end; margin-bottom: 2px; }

.taskbar { flex: none; height: 41px; padding-bottom: 1px; border-top: 1px solid #26313f; background: linear-gradient(90deg, #8797ac 56px, #a0b7d4 80px, #a4bbd8 860px, #8394aa 915px); display: flex; align-items: center; }
.start { margin-left: 9px; }
.tb { width: 59px; height: 39px; border: 1px solid #4a5d78; border-radius: 3px; background: linear-gradient(135deg, #d7e2ee, #b3c7df 45%, #a3b9d6); box-shadow: inset 0 0 0 1px #d8e3f0; display: flex; align-items: center; justify-content: center; }
.ieb { margin-left: 15px; background: linear-gradient(#eef3f8, #cfdceb); }
.ex { width: 51px; margin-left: 3px; }
.stack { height: 38px; width: 5px; border-right: 1px solid #5f738f; border-radius: 0 3px 3px 0; box-shadow: inset -1px 0 #d0dcec; }
.s2 { width: 8px; border-left: 3px double #6f839e; }
.wmp { margin-left: 17px; width: 30px; }
.ol { width: 54px; margin-left: 17px; background: linear-gradient(#fbe58c, #f5b550 60%, #ec8a3c); border-color: #a8652a; }
.gr { width: 60px; margin-left: 3px; }
.vs { width: 51px; margin-left: 2px; }
.wd { margin-left: 3px; }
.ly { width: 54px; margin-left: 3px; }
.fg { margin-left: 3px; } .ff { margin-left: 3px; } .pd { margin-left: 3px; }
.tray { margin-left: auto; display: flex; gap: 8px; }
.tray svg { width: 16px; height: 16px; }
.clock { width: 61px; margin-left: 11px; display: flex; flex-direction: column; align-items: center; color: #fff; line-height: 17px; letter-spacing: -.25px; font-size: 11.500px; }
.showdesk { width: 14px; height: 39px; margin-left: 7px; background: linear-gradient(#9aa8b8, #5f6f83 50%, #7e8fa5); border: 1px solid #46566b; }
```
